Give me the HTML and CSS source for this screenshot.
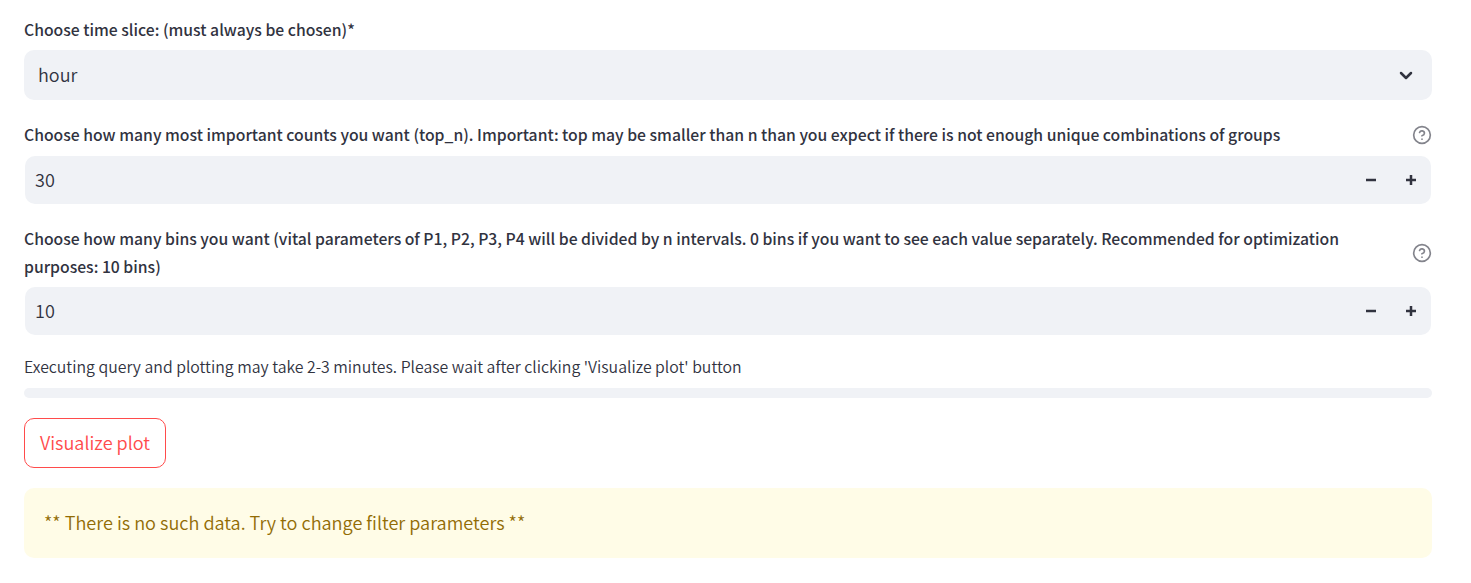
FILE: index.html
```html
<!DOCTYPE html>
<html lang="en"><head><meta charset="utf-8"><title>Plot filters</title><link rel="stylesheet" href="styles.css"></head>
<body><main class="form">
<section class="field">
<div class="label-row slice-label"><label class="label">Choose time slice: (must always be chosen)*</label></div>
<div class="select"><span class="value">hour</span><svg class="chevron" viewBox="0 0 14 10"><path d="M2 2l5 5 5-5"/></svg></div>
</section>
<section class="field top-field">
<div class="label-row"><label class="label">Choose how many most important counts you want (top_n). Important: top may be smaller than n than you expect if there is not enough unique combinations of groups</label><svg class="help" viewBox="0 0 24 24"><circle cx="12" cy="12" r="10"/><path d="M9.09 9a3 3 0 0 1 5.83 1c0 2-3 3-3 3M12 17h.01"/></svg></div>
<div class="number"><span class="value">30</span><span class="step"><svg viewBox="0 0 8 8"><path d="M0 3v2h8V3z"/></svg></span><span class="step"><svg viewBox="0 0 8 8"><path d="M3 0v3H0v2h3v3h2V5h3V3H5V0z"/></svg></span></div>
</section>
<section class="field bins-field">
<div class="label-row tall"><label class="label">Choose how many bins you want (vital parameters of P1, P2, P3, P4 will be divided by n intervals. 0 bins if you want to see each value separately. Recommended for optimization<br>purposes: 10 bins)</label><svg class="help" viewBox="0 0 24 24"><circle cx="12" cy="12" r="10"/><path d="M9.09 9a3 3 0 0 1 5.83 1c0 2-3 3-3 3M12 17h.01"/></svg></div>
<div class="number"><span class="value">10</span><span class="step"><svg viewBox="0 0 8 8"><path d="M0 3v2h8V3z"/></svg></span><span class="step"><svg viewBox="0 0 8 8"><path d="M3 0v3H0v2h3v3h2V5h3V3H5V0z"/></svg></span></div>
</section>
<p class="note">Executing query and plotting may take 2-3 minutes. Please wait after clicking 'Visualize plot' button</p>
<div class="progress"></div>
<button class="button">Visualize plot</button>
<div class="alert">** There is no such data. Try to change filter parameters **</div>
</main></body></html>
```
FILE: styles.css
```css
* { box-sizing: border-box; }
body { margin: 0; background: #fff; color: #31333f; font-family: "Source Sans Pro", "Noto Sans CJK SC", sans-serif; font-weight: 350; }
.form { display: flex; flex-direction: column; width: 1408px; margin-left: 24px; padding-top: 15px; }
.label-row { display: flex; align-items: center; justify-content: space-between; height: 41px; }
.slice-label { height: 35px; padding-bottom: 4px; }
.tall { height: 67px; }
.label { margin-top: -1px; font-size: 15.74px; line-height: 28px; font-weight: 500; white-space: nowrap; }
.select, .number { display: flex; align-items: center; height: 50px; background: #f0f2f6; border-radius: 10px; }
.select { padding: 0 19px 2px 14px; justify-content: space-between; }
.value { font-size: 18px; line-height: 28px; }
.chevron { width: 14px; height: 10px; margin-top: 3px; fill: none; stroke: #31333f; stroke-width: 2.5; stroke-linecap: round; stroke-linejoin: round; }
.top-field { margin-top: 15px; }
.number { height: 48px; margin: 0 1px; padding-left: 10px; }
.number .value { flex: 1; padding-bottom: 2px; }
.step { display: flex; width: 40px; justify-content: center; }
.step svg { width: 10px; height: 10px; fill: #31333f; }
.help { width: 20px; height: 20px; margin-bottom: 2px; fill: none; stroke: #83848c; stroke-width: 2; stroke-linecap: round; stroke-linejoin: round; }
.bins-field { margin-top: 16px; }
.note { margin: 18px 0 0; font-size: 15.84px; line-height: 28px; }
.progress { height: 10px; margin-top: 7px; border-radius: 5px; background: #f0f2f6; }
.button { width: 142px; height: 50px; margin-top: 20px; padding: 0 0 2px; border: 1px solid #ff4b4b; border-radius: 10px; background: #fff; color: #ff4b4b; font: 350 18.1px/28px "Source Sans Pro", "Noto Sans CJK SC", sans-serif; }
.alert { height: 70px; margin-top: 20px; padding: 20px; border-radius: 10px; background: #fffce7; color: #926c05; font-size: 18.1px; line-height: 28px; }
```
